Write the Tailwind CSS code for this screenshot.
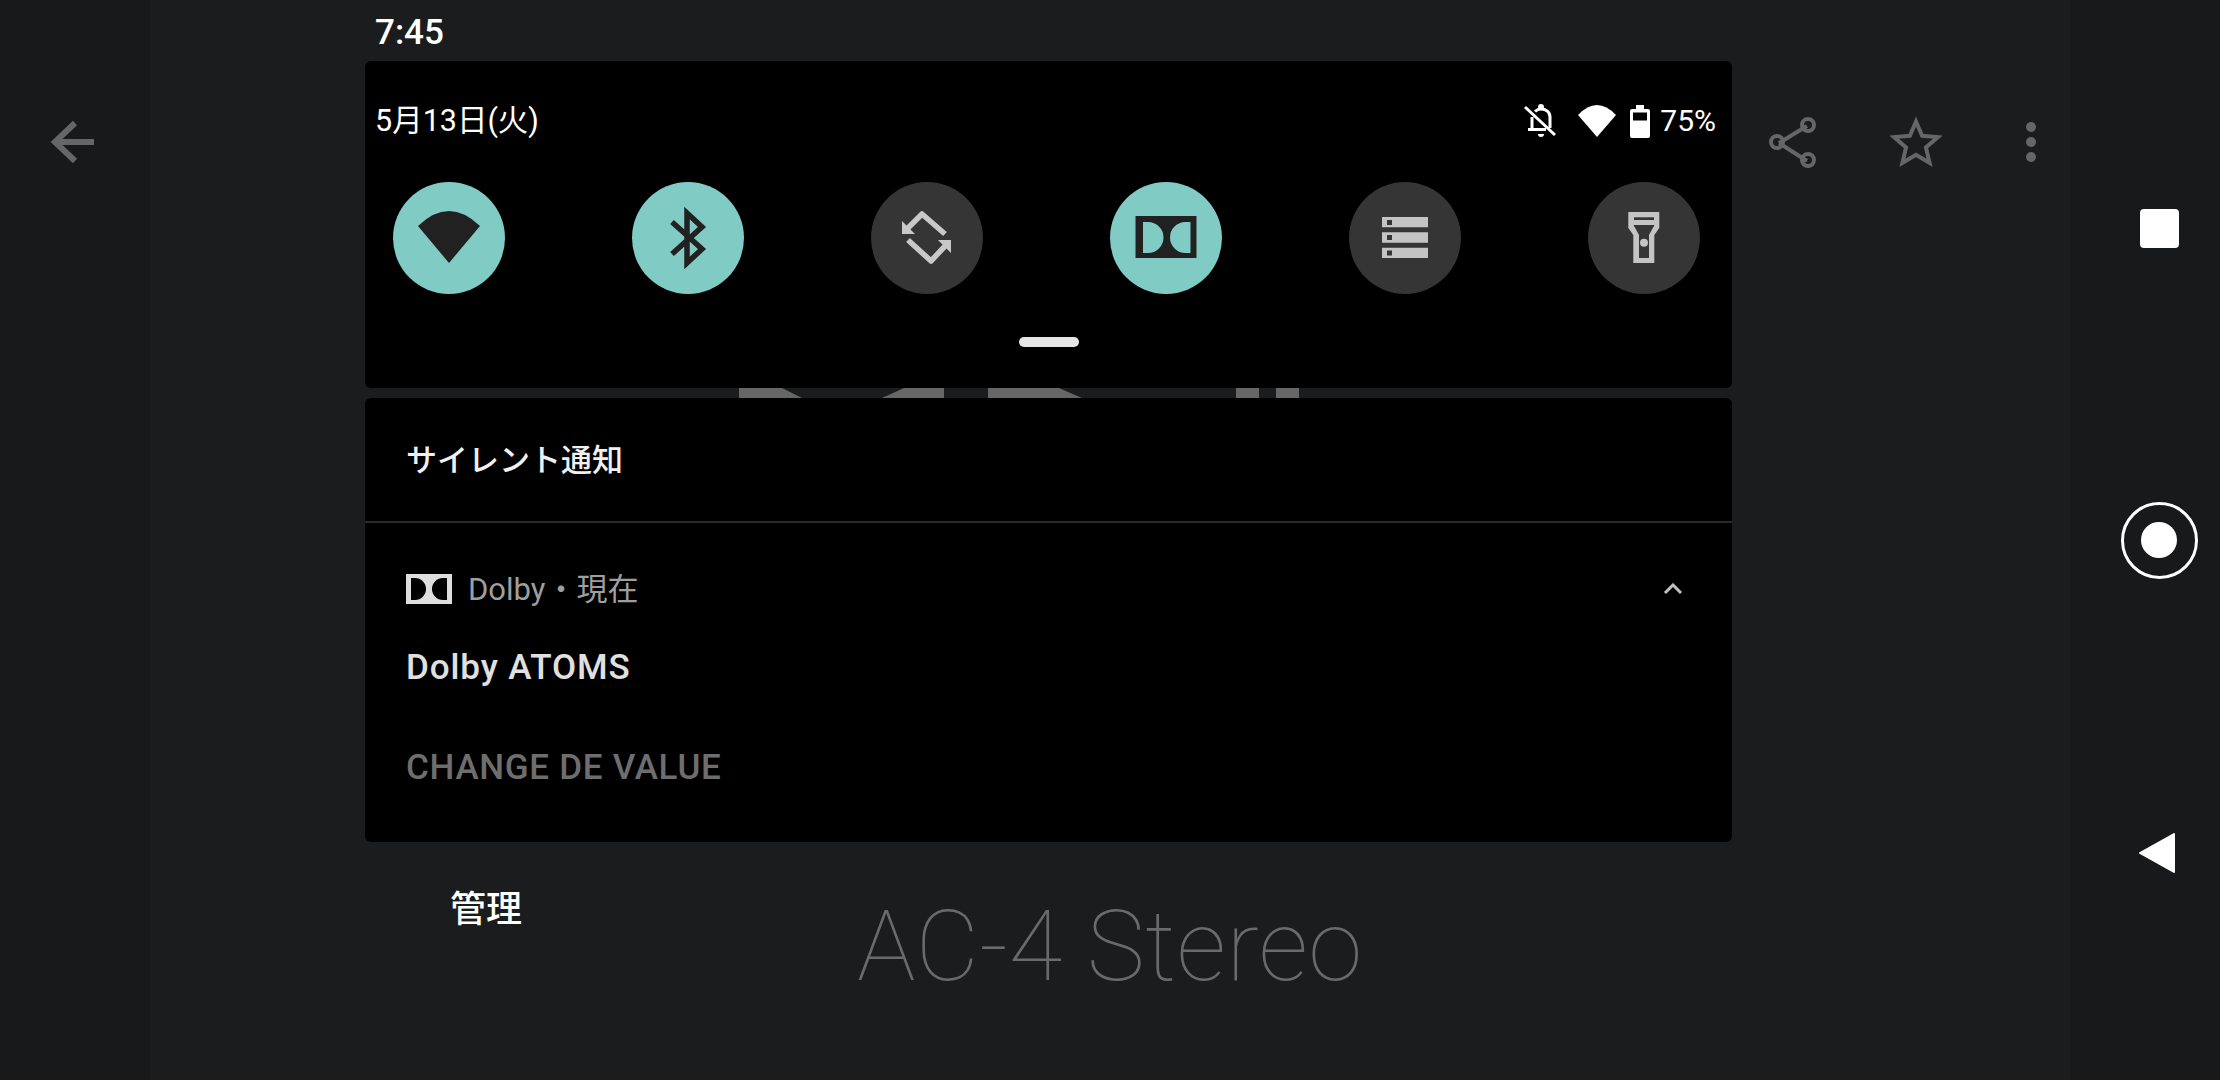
<!DOCTYPE html>
<html lang="ja">
  <head>
    <meta charset="UTF-8" />
    <title>Dolby ATOMS</title>
    <script src="https://cdn.jsdelivr.net/npm/@tailwindcss/browser@4"></script>
  </head>
  <body class="bg-[#18191b]">
    <div class="relative w-[2220px] h-[1080px] overflow-hidden font-[Roboto,'Noto_Sans_CJK_JP',sans-serif] text-white">

      <!-- app behind the shade -->
      <div class="absolute inset-0 flex">
        <div class="w-[150px] bg-[#18191b] pl-[48px] pt-[119px]">
          <svg width="48" height="46" viewBox="0 0 48 46" fill="none" stroke="#666666" stroke-width="6">
            <path d="M46 23H6" />
            <path d="M27 4 7 23l20 19" />
          </svg>
        </div>
        <div class="relative flex-1 bg-[#1b1c1e]">
          <svg class="absolute left-[589px] top-[388px]" width="560" height="10" viewBox="739 388 560 10" fill="#666666">
            <path d="M739 388H782L802 398H739Z" />
            <path d="M904 388H944V398H882Z" />
            <path d="M988 388H1059L1082 398H988Z" />
            <rect x="1236" y="388" width="23" height="10" />
            <rect x="1276" y="388" width="23" height="10" />
          </svg>
          <p class="absolute left-[707px] top-[889px] text-[98px] leading-[116px] tracking-[0.4px] font-thin text-[#6a6a6a] whitespace-nowrap">AC-4 Stereo</p>
          <div class="absolute right-0 top-[112px] flex items-center">
            <svg width="56" height="60" viewBox="0 0 56 60" fill="none" stroke="#666666" stroke-width="4" class="mr-[67px]">
              <path d="M12 31 40 14M12 31l28 18" />
              <circle cx="10" cy="30" r="6" />
              <circle cx="41" cy="13" r="6" />
              <circle cx="41" cy="48" r="6" />
            </svg>
            <svg width="52" height="52" viewBox="0 0 56 56" fill="none" stroke="#666666" stroke-width="4.300" class="mr-[84px] -mt-[2px]">
              <path d="M28 7l6.6 15.4 17 1.4-12.9 11.2 3.9 16.5L28 42.8 13.4 51.500l3.900-16.500L4.400 23.800l17-1.400z" />
            </svg>
            <div class="flex flex-col gap-[5px] mr-[34px]">
              <div class="w-[10px] h-[10px] rounded-full bg-[#666666]"></div>
              <div class="w-[10px] h-[10px] rounded-full bg-[#666666]"></div>
              <div class="w-[10px] h-[10px] rounded-full bg-[#666666]"></div>
            </div>
          </div>
        </div>
        <div class="w-[150px] bg-[#18191b] pt-[72px] pl-[50px]">
          <div class="w-[78px] h-[312px] flex items-center justify-center">
            <div class="w-[39px] h-[39px] rounded-[4px] bg-white"></div>
          </div>
          <div class="w-[78px] h-[312px] flex items-center justify-center">
            <div class="w-[77px] h-[77px] rounded-full border-[3px] border-white flex items-center justify-center">
              <div class="w-[36px] h-[36px] rounded-full bg-white"></div>
            </div>
          </div>
          <div class="w-[78px] h-[312px] flex items-center justify-center">
            <svg width="38" height="42" viewBox="0 0 38 42" fill="#ffffff" stroke="#ffffff" stroke-width="2" stroke-linejoin="round" class="mr-[5px] mt-[2px]">
              <path d="M2 21 36 2V40Z" />
            </svg>
          </div>
        </div>
      </div>

      <!-- notification shade -->
      <div class="relative ml-[365px] w-[1367px] flex flex-col">
        <div class="h-[61px] pl-[10px] pt-[3px] flex items-center">
          <span class="text-[35px] leading-none font-medium">7:45</span>
        </div>

        <section class="h-[327px] rounded-md bg-black">
          <div class="h-[40px] mt-0 translate-y-[40px] pl-[10px] pr-[16px] flex items-center justify-between">
            <span class="text-[30.500px] leading-none">5月13日(火)</span>
            <div class="flex items-center">
              <svg width="36" height="36" viewBox="0 0 36 36" fill="none" stroke="#ffffff" stroke-width="3" class="mr-[19px]">
                <path d="M3 4 33 32" />
                <path d="M28 25V14C28 9 24 6 19 6 16.500 6 14.500 7 13 8.500" />
                <path d="M10 14V26" />
                <path d="M6 26.500H24" />
                <circle cx="19" cy="4" r="1.500" fill="#ffffff" />
                <path d="M16 31h6a3 3 0 0 1-6 0Z" fill="#ffffff" stroke="none" />
              </svg>
              <svg width="40" height="32" viewBox="0 0 40 32" fill="#ffffff" class="mr-[13px]">
                <path d="M1 10Q20-10 39 10L20 32Z" />
              </svg>
              <svg width="20" height="33" viewBox="0 0 20 33" class="mr-[10px]">
                <path d="M6 0H14V4H18Q20 4 20 6V31Q20 33 18 33H2Q0 33 0 31V6Q0 4 2 4H6Z" fill="#ffffff" />
                <rect x="3" y="7.500" width="14" height="8" fill="#000000" />
              </svg>
              <span class="text-[30px] leading-none">75%</span>
            </div>
          </div>

          <div class="translate-y-[41px] mt-[40px] pl-[28px] pr-[32px] flex justify-between">
            <div class="w-[112px] h-[112px] rounded-full bg-[#80cbc4]">
              <svg width="112" height="112" viewBox="0 0 112 112" fill="#212121">
                <path d="M25 44Q56 14 87 44L56 81Z" />
              </svg>
            </div>
            <div class="w-[112px] h-[112px] rounded-full bg-[#80cbc4]">
              <svg width="112" height="112" viewBox="0 0 112 112" fill="none" stroke="#212121" stroke-width="5.500">
                <path d="M40 40 70 67 55 81V31L70 45 40 72" />
              </svg>
            </div>
            <div class="w-[112px] h-[112px] rounded-full bg-[#353535]">
              <svg width="112" height="112" viewBox="0 0 112 112">
                <path d="M74 52 51 32 35 48M37 58 60 79 76 62" fill="none" stroke="#c8c8c8" stroke-width="5.500" stroke-linejoin="round" />
                <path d="M31 52V39L44 52ZM80 58V71L67 58Z" fill="#c8c8c8" />
              </svg>
            </div>
            <div class="w-[112px] h-[112px] rounded-full bg-[#80cbc4]">
              <svg width="112" height="112" viewBox="0 0 112 112">
                <rect x="25.500" y="34" width="61" height="42" fill="#212121" />
                <path d="M33 40h5a15.500 15.500 0 0 1 0 31h-5ZM80.500 40h-5a15.500 15.500 0 0 0 0 31h5Z" fill="#80cbc4" />
              </svg>
            </div>
            <div class="w-[112px] h-[112px] rounded-full bg-[#353535]">
              <svg width="112" height="112" viewBox="0 0 112 112">
                <path d="M33 35H79V45.300H33ZM33 50.300H79V60.700H33ZM33 65.700H79V76H33Z" fill="#c4c4c4" />
                <path d="M38 38H43V43H38ZM38 53H43V58H38ZM38 68.500H43V73.500H38Z" fill="#353535" />
              </svg>
            </div>
            <div class="w-[112px] h-[112px] rounded-full bg-[#353535]">
              <svg width="112" height="112" viewBox="0 0 112 112">
                <path d="M40.300 30H71.300V46L66.300 53V81H45.300V53L40.300 46Z" fill="#c4c4c4" />
                <path d="M46 35.300H66V38H46Z" fill="#353535" />
                <path d="M45.500 43H66.500L61 53V76H51V53Z" fill="#353535" />
                <circle cx="56" cy="60.700" r="4" fill="#c4c4c4" />
              </svg>
            </div>
          </div>

          <div class="mt-[84px] mx-auto w-[60px] h-[10px] rounded-full bg-[#e6e6e6]"></div>
        </section>

        <section class="mt-[10px] h-[444px] rounded-md bg-black">
          <div class="h-[123px] pl-[41px] pt-[1px] flex items-center">
            <h2 class="text-[31px] leading-none font-medium text-[#f0f0f0]">サイレント通知</h2>
          </div>
          <div class="h-[2px] bg-[#2a2b2d]"></div>
          <div class="pl-[41px] pr-[49px] pt-[51px]">
            <div class="h-[30px] flex items-center">
              <svg width="46" height="30" viewBox="0 0 46 30" class="mr-[16px]">
                <rect width="46" height="30" fill="#dedede" />
                <path d="M5 4h4a11 11 0 0 1 0 22H5ZM41 4h-4a11 11 0 0 0 0 22h4Z" fill="#000000" />
              </svg>
              <span class="text-[31px] leading-none text-[#9e9e9e]">Dolby・現在</span>
              <svg width="20" height="12" viewBox="0 0 20 12" fill="none" stroke="#c0c0c0" stroke-width="3" class="ml-auto">
                <path d="M2 10 10 2l8 8" />
              </svg>
            </div>
            <p class="mt-[44px] text-[35px] leading-[40px] tracking-[0.9px] font-medium text-[#e0e0e0]">Dolby ATOMS</p>
            <p class="mt-[60px] text-[35px] leading-[40px] tracking-[0.7px] font-medium text-[#6e6e6e]">CHANGE DE VALUE</p>
          </div>
        </section>

        <p class="mt-[48px] ml-[85px] text-[36px] leading-[40px] font-medium">管理</p>
      </div>
    </div>
  </body>
</html>
